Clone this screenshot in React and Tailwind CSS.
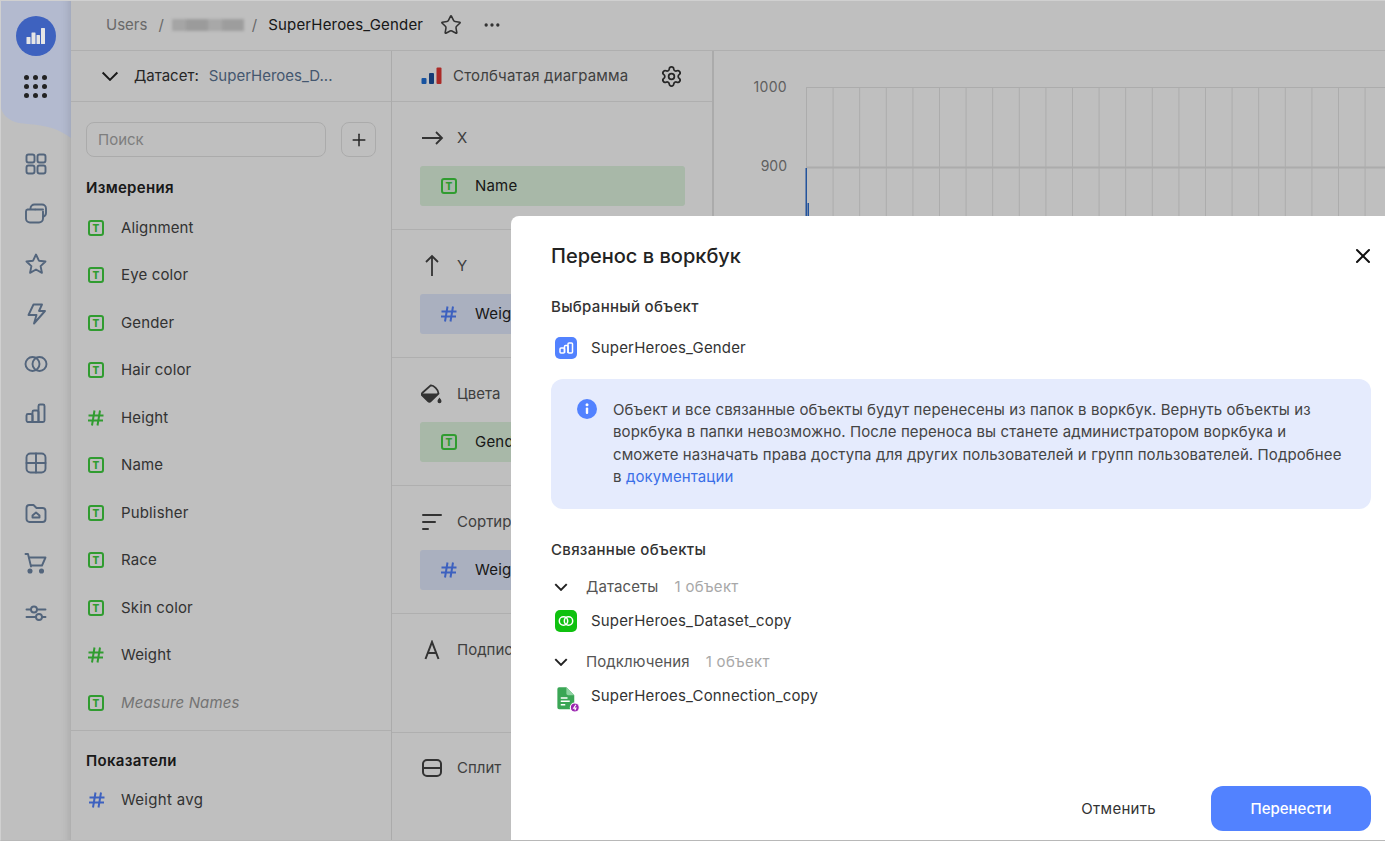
import { Plus, Star, Ellipsis, Settings, X } from 'lucide-react';

const FONT = "font-['Inter','Noto_Sans',sans-serif]";

const dimensions = [
    { name: 'Alignment', type: 't' },
    { name: 'Eye color', type: 't' },
    { name: 'Gender', type: 't' },
    { name: 'Hair color', type: 't' },
    { name: 'Height', type: 'h' },
    { name: 'Name', type: 't' },
    { name: 'Publisher', type: 't' },
    { name: 'Race', type: 't' },
    { name: 'Skin color', type: 't' },
    { name: 'Weight', type: 'h' },
    { name: 'Measure Names', type: 't', italic: true },
];

function TypeT() {
    return (
        <span className="flex h-4 w-4 shrink-0 items-center justify-center rounded-[3px] border-2 border-[#40d040] text-[10px] leading-none font-extrabold text-[#40d040]">T</span>
    );
}

function HashIcon({ className }) {
    return (
        <svg width="18" height="18" viewBox="0 0 18 18" fill="none" stroke="currentColor" strokeWidth="2" className={className}>
            <path d="M1.500 6.500h15M1 11.500h15M7.500 1.500 5 16.500M13 1.500 10.500 16.500" />
        </svg>
    );
}

function Chevron({ width }) {
    return (
        <svg width={width} height={width * 0.6} viewBox="0 0 18 11" fill="none" stroke="#222" strokeWidth={width > 15 ? 2 : 2.600} className="shrink-0">
            <path d="M1.500 1.500 9 9l7.500-7.500" />
        </svg>
    );
}

function SideIcon({ children }) {
    return (
        <svg width="24" height="24" viewBox="0 0 24 24" fill="none" stroke="currentColor" strokeWidth="1.900" strokeLinecap="round" strokeLinejoin="round">
            {children}
        </svg>
    );
}

const sideIcons = [
    <>
        <rect x="2.500" y="2.500" width="8" height="8" rx="2" />
        <rect x="13.500" y="2.500" width="8" height="8" rx="2" />
        <rect x="2.500" y="13.500" width="8" height="8" rx="2" />
        <rect x="13.500" y="13.500" width="8" height="8" rx="2" />
    </>,
    <>
        <path d="M6.500 7V6.500a4 4 0 0 1 4-4h7.500a4 4 0 0 1 4 4V11a4 4 0 0 1-3 3.800" />
        <path d="M11 7.500H3.500A2 2 0 0 0 2 9.500v7a4 4 0 0 0 4 4h9a4 4 0 0 0 4-4v-7" />
        <path d="M11.500 7.500h7.500" />
    </>,
    <path d="m12 2.500 2.900 6.200 6.600.8-4.900 4.600 1.300 6.700L12 17.500l-5.900 3.300 1.300-6.700-4.900-4.600 6.600-.8z" />,
    <path d="M9.500 2.500h8.500l-3 6.500h6L10 21.500l2.500-8.500H4.500z" />,
    <>
        <circle cx="8.500" cy="12" r="7" />
        <circle cx="15.500" cy="12" r="7" />
    </>,
    <>
        <rect x="2.500" y="13" width="6" height="8" rx="1.500" />
        <path d="M8.500 21V11a1.500 1.500 0 0 1 1.500-1.500h3a1.500 1.500 0 0 1 1.500 1.500v10" />
        <path d="M14.500 21V5a1.500 1.500 0 0 1 1.500-1.500h3A1.500 1.500 0 0 1 20.500 5v14.500a1.500 1.500 0 0 1-1.500 1.500H4" />
    </>,
    <>
        <rect x="2.500" y="2.500" width="19" height="19" rx="4" />
        <path d="M12 2.500v19M2.500 12h19" />
    </>,
    <>
        <path d="M2.500 7a3 3 0 0 1 3-3h4l3 3h6a3 3 0 0 1 3 3v8a3 3 0 0 1-3 3h-13a3 3 0 0 1-3-3z" />
        <path d="M8.500 16.500v-2l3.500-3 3.500 3v2z" />
    </>,
    <>
        <path d="M1.500 3h2.500l3 12.500" />
        <path d="M5 6.500h16.500L18 14.500H7" />
        <circle cx="6" cy="20" r="1.600" fill="currentColor" />
        <circle cx="17.500" cy="20" r="1.600" fill="currentColor" />
    </>,
    <>
        <path d="M2.500 8.500h4.500M13 8.500h8.500M2.500 16h9M18 16h3.500" />
        <circle cx="10" cy="8.500" r="3" />
        <circle cx="15" cy="16" r="3" />
    </>,
];

function Sidebar() {
    return (
        <aside className="relative flex h-full w-[71px] shrink-0 flex-col items-center text-[#6f87a6]">
            {/* top block sits above the dimming layer, its tint can't be reached through it */}
            <svg width="71" height="140" viewBox="0 0 71 140" className="absolute top-0 left-0 z-10">
                <path d="M0 0H71V138C50 122 30 126 15 122C5 118 0 112 0 100Z" fill="#b3bacf" />
            </svg>
            <div className="pointer-events-none absolute inset-0 z-20 shadow-[inset_-10px_0_8px_-8px_rgba(0,0,0,0.12)]" />
            <div className="relative z-20 mt-4 flex h-10 w-10 items-center justify-center rounded-full bg-[#3e62bf]">
                <svg width="20" height="20" viewBox="0 0 20 20" fill="#e6e6e6">
                    <rect x="0.500" y="11" width="4" height="7" rx="0.500" />
                    <rect x="5.500" y="6.500" width="4" height="11.500" rx="0.500" />
                    <rect x="10.500" y="9" width="3.500" height="9" rx="0.500" />
                    <rect x="15" y="2" width="4" height="16" rx="0.500" />
                </svg>
            </div>
            <div className="relative z-20 mt-[19px] grid grid-cols-3 gap-[4px]">
                {Array.from({ length: 9 }).map((_, i) => (
                    <span key={i} className="h-[5px] w-[5px] rounded-full bg-[#222]" />
                ))}
            </div>
            <div className="relative mt-[54px] flex flex-col items-center gap-[25.900px]">
                {sideIcons.map((icon, i) => (
                    <SideIcon key={i}>{icon}</SideIcon>
                ))}
            </div>
        </aside>
    );
}

function Header() {
    return (
        <header className="flex h-[51px] shrink-0 items-center border-b border-[#eaeaea] pl-[35px] text-[15px]">
            <span className="text-[#8c8c8c]">Users</span>
            <span className="ml-[11px] text-[#8c8c8c]">/</span>
            <span className="ml-[8px] flex h-3 w-[72px] blur-[1.500px]">
                <span className="w-[14px] bg-[#dcdcdc]" />
                <span className="w-[22px] bg-[#cfcfcf]" />
                <span className="w-[14px] bg-[#e0e0e0]" />
                <span className="w-[22px] bg-[#d2d2d2]" />
            </span>
            <span className="ml-[8px] text-[#8c8c8c]">/</span>
            <span className="ml-[11px] tracking-[0.170px] text-[#222]">SuperHeroes_Gender</span>
            <Star size={22} strokeWidth={1.700} className="ml-[17px] text-[#444]" />
            <Ellipsis size={20} className="ml-[20px] text-[#444]" />
        </header>
    );
}

function DatasetPanel() {
    return (
        <section className="h-full w-[321px] shrink-0 overflow-hidden border-r border-[#e5e5e5]">
            <div className="flex h-[51px] items-center border-b border-[#eaeaea] pl-[30px] text-[15px]">
                <Chevron width={18} />
                <span className="ml-[15px] text-[#333]">Датасет:</span>
                <span className="ml-[10px] text-[#5b7594]">SuperHeroes_D...</span>
            </div>
            <div className="flex items-center px-[15px] pt-[20px]">
                <div className="flex h-[35px] w-[240px] items-center rounded-lg border border-[#e5e5e5] px-[11px] pt-[1px] text-[15px] text-[#a8a8a8]">Поиск</div>
                <div className="ml-[15px] flex h-[35px] w-[35px] items-center justify-center rounded-lg border border-[#e5e5e5] text-[#333]">
                    <Plus size={20} strokeWidth={1.800} />
                </div>
            </div>
            <h3 className="mt-[21px] pl-[15px] text-[15px] leading-[20px] font-semibold tracking-[0.300px] text-[#222]">Измерения</h3>
            <ul className="mt-[6px]">
                {dimensions.map((d) => (
                    <li key={d.name} className="flex h-[47.500px] items-center pl-[17px] text-[15px] tracking-[0.150px]">
                        <span className="flex w-4 justify-center">
                            {d.type === 't' ? <TypeT /> : <HashIcon className="shrink-0 text-[#40d040]" />}
                        </span>
                        <span className={`ml-[17px] ${d.italic ? 'text-[#9a9a9a] italic' : 'text-[#444]'}`}>{d.name}</span>
                    </li>
                ))}
            </ul>
            <div className="mt-[3px] border-t border-[#eaeaea] pt-[20px]">
                <h3 className="pl-[15px] text-[15px] leading-[20px] font-semibold tracking-[0.300px] text-[#222]">Показатели</h3>
                <div className="mt-[6px] flex h-[47.500px] items-center pl-[17px] text-[15px] tracking-[0.300px]">
                    <HashIcon className="shrink-0 text-[#5282ff]" />
                    <span className="ml-[15px] text-[#444]">Weight avg</span>
                </div>
                <div className="flex h-[47.500px] items-center pl-[17px]">
                    <HashIcon className="shrink-0 text-[#5282ff]" />
                </div>
            </div>
        </section>
    );
}

function Pill({ color, type, label }) {
    return (
        <div className={`ml-[28px] mt-[14px] flex h-10 w-[265px] items-center rounded-[3px] pl-[21px] text-[15px] tracking-[0.200px] text-[#222] ${color}`}>
            <span className="flex w-4 justify-center">
                {type === 't' ? <TypeT /> : <HashIcon className="shrink-0 text-[#5282ff]" />}
            </span>
            <span className="ml-[18px] pt-[1px]">{label}</span>
        </div>
    );
}

function Section({ icon, title, height, top = 'pt-[22px]', pill }) {
    return (
        <div className={`border-b border-[#eaeaea] ${top} ${height}`}>
            <div className="flex h-[28px] items-center pl-[28px] text-[15px] text-[#555]">
                <span className="flex w-6 justify-center text-[#444]">{icon}</span>
                <span className="ml-[13px]">{title}</span>
            </div>
            {pill}
        </div>
    );
}

function VizPanel() {
    return (
        <section className="h-full w-[322px] shrink-0 overflow-hidden border-r-2 border-[#e5e5e5]">
            <div className="flex h-[51px] items-center border-b border-[#eaeaea] pl-[29px] text-[15px]">
                <svg width="22" height="18" viewBox="0 0 22 18">
                    <rect x="0.500" y="11" width="5" height="6" rx="1" fill="#1f6fd6" />
                    <rect x="8" y="6" width="5" height="11" rx="1" fill="#1c4f9c" />
                    <rect x="15.500" y="0.500" width="5" height="16.500" rx="1" fill="#e53935" />
                </svg>
                <span className="ml-[10px] tracking-[0.170px] text-[#555]">Столбчатая диаграмма</span>
                <Settings size={23} strokeWidth={1.800} className="ml-[32px] text-[#333]" />
            </div>
            <Section
                height="h-[128px]"
                title="X"
                icon={
                    <svg width="24" height="24" viewBox="0 0 24 24" fill="none" stroke="currentColor" strokeWidth="1.800">
                        <path d="M2 12h20M16 6l6 6-6 6" />
                    </svg>
                }
                pill={<Pill color="bg-[#e0f6e0]" type="t" label="Name" />}
            />
            <Section
                height="h-[128px]"
                title="Y"
                icon={
                    <svg width="24" height="24" viewBox="0 0 24 24" fill="none" stroke="currentColor" strokeWidth="1.800">
                        <path d="M12 22V2M6 8l6-6 6 6" />
                    </svg>
                }
                pill={<Pill color="bg-[#e3ebff]" type="h" label="Weight avg" />}
            />
            <Section
                height="h-[128px]"
                title="Цвета"
                icon={
                    <svg width="22" height="22" viewBox="0 0 22 22" fill="currentColor">
                        <path d="M1.200 10 9.500 2.500c3-.5 8 4 8 8L9.800 18c-.8.800-2 .8-2.800 0l-5.800-5.500c-.7-.8-.7-1.700 0-2.500z" fill="none" stroke="currentColor" strokeWidth="1.800" />
                        <path d="M1.200 10.500h15.800L9.800 18c-.8.800-2 .8-2.800 0l-5.800-5.500c-.7-.8-.7-1.300 0-2z" />
                        <path d="M18.500 14.500c1.200 1.700 2 2.700 2 3.800a2 2 0 0 1-4 0c0-1.100.8-2.100 2-3.800z" />
                    </svg>
                }
                pill={<Pill color="bg-[#e0f6e0]" type="t" label="Gender" />}
            />
            <Section
                height="h-[128px]"
                title="Сортировка"
                icon={
                    <svg width="24" height="24" viewBox="0 0 24 24" fill="none" stroke="currentColor" strokeWidth="2" strokeLinecap="round">
                        <path d="M3 5h18M3 12h12M3 19h5" />
                    </svg>
                }
                pill={<Pill color="bg-[#e3ebff]" type="h" label="Weight avg" />}
            />
            <Section
                height="h-[119px]"
                title="Подписи"
                icon={
                    <svg width="16" height="20" viewBox="0 0 16 20" fill="none" stroke="currentColor" strokeWidth="2">
                        <path d="M1.500 19 8 2l6.500 17M3.800 13h8.400" />
                    </svg>
                }
            />
            <Section
                height="h-[125px]"
                top="pt-[21px]"
                title="Сплит"
                icon={
                    <svg width="22" height="20" viewBox="0 0 22 20" fill="none" stroke="currentColor" strokeWidth="2">
                        <rect x="2" y="2" width="18" height="16" rx="4" />
                        <path d="M2 10h18" />
                    </svg>
                }
            />
        </section>
    );
}

function ChartArea() {
    const lines = Array.from({ length: 22 }, (_, i) => 92.500 + i * 26.600);
    return (
        <section className="min-w-0 flex-1 overflow-hidden">
            <svg width="672" height="200" viewBox="0 0 672 200" className="block">
                <text x="73" y="41" textAnchor="end" fontSize="14" letterSpacing="0.300" fill="#808080">1000</text>
                <text x="73" y="120" textAnchor="end" fontSize="14" fill="#808080">900</text>
                {lines.map((x) => (
                    <line key={x} x1={x} x2={x} y1="36" y2="200" stroke="#e6e6e6" strokeWidth="1" />
                ))}
                <line x1="92" x2="672" y1="36.500" y2="36.500" stroke="#e6e6e6" />
                <line x1="92" x2="672" y1="116.500" y2="116.500" stroke="#e6e6e6" strokeWidth="2" />
                <rect x="91.500" y="117" width="1.500" height="83" fill="#2f6fd0" />
                <rect x="93.500" y="152" width="1.500" height="48" fill="#2f6fd0" />
            </svg>
        </section>
    );
}

function ObjectRow({ icon, name }) {
    return (
        <div className="flex h-[24px] items-center text-[15px] tracking-[0.170px] text-[#333]">
            <span className="flex w-[40px] shrink-0 items-center pl-[4px]">{icon}</span>
            {name}
        </div>
    );
}

function Tile({ color, children }) {
    return <span className={`flex h-[22px] w-[22px] items-center justify-center rounded-[5px] ${color}`}>{children}</span>;
}

function Group({ title, count, children }) {
    return (
        <div>
            <div className="flex h-[24px] items-center text-[15px] tracking-[0.100px]">
                <span className="flex w-5 justify-center"><Chevron width={14} /></span>
                <span className="ml-[15px] text-[#555]">{title}</span>
                <span className="ml-[16px] tracking-[0.300px] text-[#a8a8a8]">{count}</span>
            </div>
            <div className="mt-[10px]">{children}</div>
        </div>
    );
}

function Modal() {
    return (
        <div className="absolute top-[216px] right-0 bottom-0 left-[511px] flex flex-col rounded-tl-[8px] bg-white pl-[40px] pr-[14px]">
            <div className="flex items-center justify-between pt-[26px]">
                <h2 className="text-[20px] leading-[28px] font-medium text-[#222]">Перенос в воркбук</h2>
                <X size={24} strokeWidth={2} className="-mr-[4px] text-[#111]" />
            </div>
            <h4 className="mt-[27px] text-[15px] leading-[20px] font-medium tracking-[0.300px] text-[#333]">Выбранный объект</h4>
            <div className="mt-[19px]">
                <ObjectRow
                    name="SuperHeroes_Gender"
                    icon={
                        <Tile color="bg-[#5282ff]">
                            <svg width="15" height="12" viewBox="0 0 15 12" fill="none" stroke="#fff" strokeWidth="1.500">
                                <rect x="1" y="6" width="4.500" height="5" rx="1" />
                                <path d="M5.500 11V4.500a1 1 0 0 1 1-1H8a1 1 0 0 1 1 1V11" />
                                <rect x="9" y="1" width="4.500" height="10" rx="1" />
                            </svg>
                        </Tile>
                    }
                />
            </div>
            <div className="mt-[19px] flex h-[130px] rounded-xl bg-[#e5ebfd] pt-[20px] pl-[26px]">
                <svg width="20" height="20" viewBox="0 0 20 20" className="shrink-0">
                    <circle cx="10" cy="10" r="10" fill="#5282ff" />
                    <rect x="8.800" y="8.500" width="2.400" height="6.500" rx="1" fill="#fff" />
                    <circle cx="10" cy="5.800" r="1.500" fill="#fff" />
                </svg>
                <p className="ml-[16px] text-[15px] leading-[22.400px] tracking-[0.100px] text-[#444]">
                    <span className="block whitespace-nowrap">Объект и все связанные объекты будут перенесены из папок в воркбук. Вернуть объекты из</span>
                    <span className="block whitespace-nowrap">воркбука в папки невозможно. После переноса вы станете администратором воркбука и</span>
                    <span className="block whitespace-nowrap">сможете назначать права доступа для других пользователей и групп пользователей. Подробнее</span>
                    <span className="block whitespace-nowrap">в <span className="text-[#3b6fe8]">документации</span></span>
                </p>
            </div>
            <h4 className="mt-[31px] text-[15px] leading-[20px] font-medium tracking-[0.300px] text-[#333]">Связанные объекты</h4>
            <div className="mt-[15px]">
                <Group title="Датасеты" count="1 объект">
                    <ObjectRow
                        name="SuperHeroes_Dataset_copy"
                        icon={
                            <Tile color="bg-[#0fc10f]">
                                <svg width="16" height="12" viewBox="0 0 16 12" fill="none" stroke="#fff" strokeWidth="1.500">
                                    <circle cx="5.500" cy="6" r="4.200" />
                                    <circle cx="10.500" cy="6" r="4.200" />
                                </svg>
                            </Tile>
                        }
                    />
                </Group>
            </div>
            <div className="mt-[17px]">
                <Group title="Подключения" count="1 объект">
                    <ObjectRow
                        name="SuperHeroes_Connection_copy"
                        icon={
                            <svg width="27" height="27" viewBox="0 0 24 24" className="-ml-[1px] mt-[4px] shrink-0">
                                <path d="M3 3.500A1.500 1.500 0 0 1 4.500 2H11l7 7v11a1.500 1.500 0 0 1-1.500 1.500h-12A1.500 1.500 0 0 1 3 20z" fill="#3aa655" />
                                <path d="M11 2l7 7h-5.500A1.500 1.500 0 0 1 11 7.500z" fill="#8fd3a2" />
                                <path d="M6 11.500h6M6 14.500h8M6 17.500h4" stroke="#fff" strokeWidth="1.300" />
                                <circle cx="18.500" cy="20" r="4" fill="#9c27b0" stroke="#fff" />
                                <path d="M19.500 17.500 17.500 20.500h2l-1 2" stroke="#fff" strokeWidth="1" fill="none" />
                            </svg>
                        }
                    />
                </Group>
            </div>
            <div className="mt-auto flex items-center justify-end pb-[10px]">
                <span className="mr-[55px] pt-[2px] text-[15px] tracking-[0.300px] text-[#333]">Отменить</span>
                <button className="h-[45px] w-[160px] rounded-xl bg-[#5282ff] pt-[2px] text-[15px] font-medium text-white">Перенести</button>
            </div>
        </div>
    );
}

export default function App() {
    return (
        <div className={`relative flex h-[841px] w-[1385px] overflow-hidden bg-white ${FONT}`}>
            <Sidebar />
            <main className="flex h-full min-w-0 flex-1 flex-col">
                <Header />
                <div className="flex min-h-0 flex-1">
                    <DatasetPanel />
                    <VizPanel />
                    <ChartArea />
                </div>
            </main>
            <div className="absolute inset-0 bg-black/25" />
            <Modal />
            <div className="pointer-events-none absolute inset-0 z-30 border-t border-b border-l border-t-[#d0d0d0] border-b-[#b8b8b8] border-l-[#d0d0d0]" />
        </div>
    );
}
